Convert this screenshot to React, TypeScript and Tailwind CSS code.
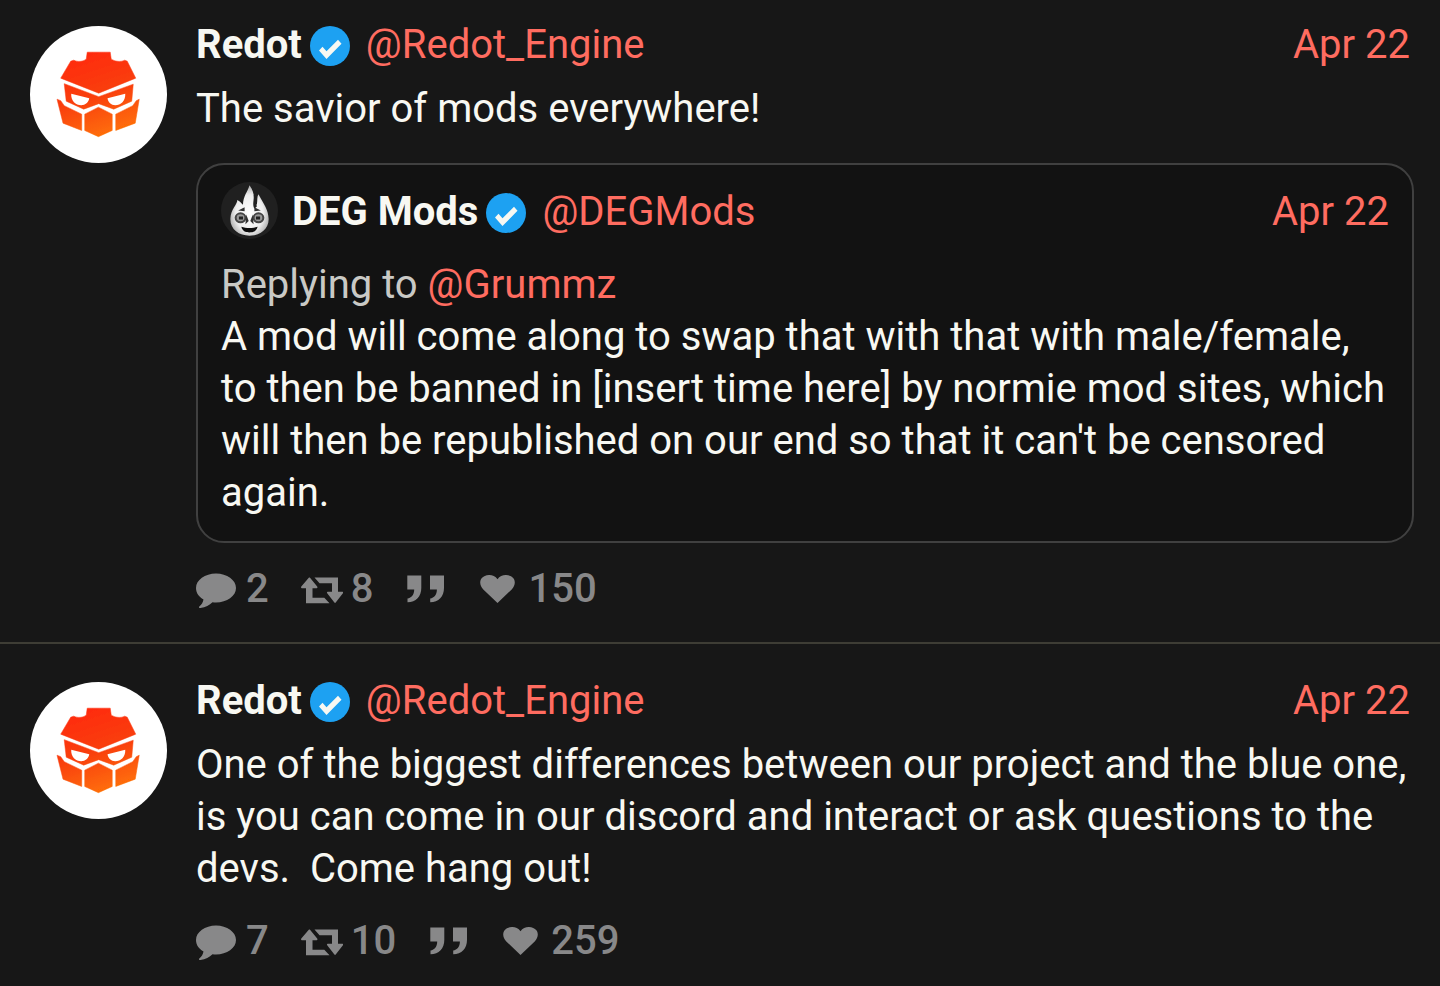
import type { ReactNode } from "react";

function RedotAvatar() {
  return (
    <svg viewBox="0 0 160 160" className="size-full" role="img" aria-label="Redot">
      <defs>
        <linearGradient id="redot" gradientUnits="userSpaceOnUse" x1="60" y1="38" x2="88" y2="122">
          <stop offset="0" stopColor="#ff2a08" />
          <stop offset="0.5" stopColor="#f93f10" />
          <stop offset="1" stopColor="#ff7205" />
        </linearGradient>
        <filter id="smooth" x="-10%" y="-10%" width="120%" height="120%">
          <feGaussianBlur stdDeviation="0.45" />
        </filter>
      </defs>
      <rect width="160" height="160" fill="#fff" />
      <g transform="translate(-12 -11.5) scale(1.168)" filter="url(#smooth)">
        <path
          fill="url(#redot)"
          stroke="url(#redot)"
          strokeWidth="0.5"
          d="M67.500 36H90.500L91.500 43C96 45.500 101 46 105 44L107.500 45L116 62L79 77L41 62L51 45L54 44C58 46 63 45.500 66.500 43ZM44.500 67.500L79 80.500L113.500 68L112 85L94 93L79 87.500L64 93L46.500 85ZM37.300 83L41 84.500L44.500 89.500L62 98V114.300L43.300 107ZM119.500 83L116.500 84.500L113 89.500L96 98V114.300L115.500 107ZM78.700 91L92.500 98V114.300L78.700 120.500L65 114.300V98Z"
        />
        <path
          fill="#fff"
          d="M51.500 77.500L69.500 82C69 86 65.500 89 61.500 89C56 89 51 84.500 51.500 77.500ZM105.500 77.500L87.800 82C88.300 86 91.500 89 95.500 89C101 89 106 84.500 105.500 77.500Z"
        />
      </g>
    </svg>
  );
}

function DegModsAvatar() {
  return (
    <svg viewBox="0 0 70 70" className="size-full" role="img" aria-label="DEG Mods">
      <defs>
        <radialGradient id="flame" cx="0.5" cy="0.55" r="0.6">
          <stop offset="0" stopColor="#fff" />
          <stop offset="0.6" stopColor="#eee" />
          <stop offset="1" stopColor="#999" />
        </radialGradient>
        <filter id="soft" x="-20%" y="-20%" width="140%" height="140%">
          <feGaussianBlur stdDeviation="0.9" />
        </filter>
      </defs>
      <rect width="70" height="70" fill="#202020" />
      <g filter="url(#soft)">
        <path
          fill="url(#flame)"
          d="M35 4C33 12 27 17 27 28C25 26 24 24 20 22C20 28 12 33 11.500 45C11 58 22 66 35 66C48 66 59 58 58.500 45C58 34 53 28 46 15C44 18 45 22 44 28C39 24 43 15 35 4Z"
        />
        <path fill="#222" d="M40 16C44 22 43 25 44 30L41 33C38 27 41 22 40 16Z" />
        <ellipse cx="24" cy="44" rx="6" ry="5.500" fill="#999" stroke="#444" strokeWidth="2.500" />
        <ellipse cx="46" cy="44" rx="6" ry="5.500" fill="#999" stroke="#444" strokeWidth="2.500" />
        <path fill="#222" d="M22 42.500h5v3.500h-5zM43 42.500h5v3.500h-5z" />
        <path fill="#333" d="M21 35L29 31V36ZM49 35L41 31V36ZM31 40L34 48L30 52ZM39 40L36 48L40 52Z" />
        <path fill="#111" d="M25 55C31 57 39 57 45 55C44 60 40 62 35 62C30 62 26 60 25 55Z" />
      </g>
    </svg>
  );
}

function VerifiedBadge() {
  return (
    <svg viewBox="0 0 40 40" className="mt-px size-10 shrink-0" role="img" aria-label="Verified">
      <circle cx="20" cy="20" r="20" fill="#1da1f2" />
      <path fill="#f8f8f2" d="M12.500 20.800L9 24.500L16.500 33L31.500 17.800L28 13.800L16.500 25.300Z" />
    </svg>
  );
}

function CommentIcon() {
  return (
    <svg viewBox="0 0 40 36" className="h-9 w-10" fill="currentColor" aria-hidden="true">
      <path d="M20 0.500C9 0.500 0 7 0 15C0 20 3 24 7.500 26.500C7 29.500 5.500 31.500 3.300 33.500C2.500 34.500 3.200 35.200 4.500 35C9.500 34.200 13.500 32 16.500 29.200C17.600 29.400 18.800 29.500 20 29.500C31 29.500 40 23 40 15C40 7 31 0.500 20 0.500Z" />
    </svg>
  );
}

function RetweetIcon() {
  return (
    <svg viewBox="0 0 42 28" className="h-7 w-[42px]" fill="currentColor" aria-hidden="true">
      <path d="M8 0.500L0.300 9.500C-0.300 10.400 0.200 11.200 1.300 11.200H5V26.200H28.500L23.300 20.700H11.500V11.200H15.200C16.300 11.200 16.800 10.400 16.200 9.500L9 0.800C8.700 0.300 8.300 0.300 8 0.500Z" />
      <path d="M13.500 0.500H37V14.700H41C42.100 14.700 42.500 15.600 41.900 16.300L34.700 25.500C34.300 26 33.800 26 33.400 25.500L26.200 16.300C25.600 15.600 26 14.700 27.100 14.700H31V6.200H18.500Z" />
    </svg>
  );
}

function QuoteIcon() {
  return (
    <svg viewBox="0 0 38 28" className="h-7 w-[38px]" fill="currentColor" aria-hidden="true">
      <path d="M0.300 0.500H14.300V13C14.300 21.500 9 27 0.500 27.300V23.500C4.500 23 7.200 19.500 7.200 14.500H0.300ZM23 0.500H37V13C37 21.500 31.700 27 23.200 27.300V23.500C27.200 23 29.900 19.500 29.900 14.500H23Z" />
    </svg>
  );
}

function HeartIcon() {
  return (
    <svg viewBox="0 0 36 28" className="h-7 w-9" fill="currentColor" aria-hidden="true">
      <path d="M17.500 28L3.300 14.500C0 11.300 -0.800 6.500 1.600 3.300C5 -1 13.500 -1.500 17.500 4.200C21.500 -1.500 30 -1 33.400 3.300C35.800 6.500 35 11.300 31.700 14.500Z" />
    </svg>
  );
}

function Author({ name, handle }: { name: string; handle: string }) {
  return (
    <>
      <a href="#profile" className="font-bold">{name}</a>
      <span className="ml-2 flex items-center">
        <VerifiedBadge />
      </span>
      <a href="#profile" className="ml-4 text-[#ff6c60]">{handle}</a>
      <a href="#status" className="ml-auto text-[#ff6c60]">Apr 22</a>
    </>
  );
}

type PostProps = {
  className: string;
  replies: number;
  retweets: number;
  likes: number;
  children: ReactNode;
};

function Post({ className, replies, retweets, likes, children }: PostProps) {
  return (
    <article className={`flex gap-[29px] pr-[26px] pl-[30px] ${className}`}>
      <a href="#profile" className="mt-[7px] size-[137px] shrink-0 overflow-hidden rounded-full">
        <RedotAvatar />
      </a>
      <div className="min-w-0 flex-1">
        <header className="flex pr-1">
          <Author name="Redot" handle="@Redot_Engine" />
        </header>
        {children}
        <div className="mt-5 flex items-center font-medium text-[#888889]">
          <span className="flex items-center gap-[10px]">
            <span className="pt-1"><CommentIcon /></span>
            {replies}
          </span>
          <span className="ml-8 flex items-center gap-2">
            <span className="pt-1"><RetweetIcon /></span>
            {retweets}
          </span>
          <span className="ml-[34px]">
            <QuoteIcon />
          </span>
          <span className="ml-[35px] flex items-center gap-3">
            <HeartIcon />
            {likes}
          </span>
        </div>
      </div>
    </article>
  );
}

export default function App() {
  return (
    <main className="min-h-screen bg-[#171717] font-['Roboto',sans-serif] text-[40px] leading-[52px] text-[#f8f8f2]">
      <Post className="pt-[19px] pb-[27px]" replies={2} retweets={8} likes={150}>
        <p className="mt-3">The savior of mods everywhere!</p>
        <section className="mt-7 rounded-[28px] border-2 border-[#404040] bg-[#121212] px-[23px] pt-[17px] pb-[22px]">
          <header className="flex items-end">
            <a href="#profile" className="mr-[14px] size-[57px] shrink-0 overflow-hidden rounded-full">
              <DegModsAvatar />
            </a>
            <span className="flex flex-1 pb-px">
              <Author name="DEG Mods" handle="@DEGMods" />
            </span>
          </header>
          <p className="mt-5 text-[#c9c9c5]">
            Replying to <a href="#profile" className="text-[#ff6c60]">@Grummz</a>
          </p>
          <p>
            A mod will come along to swap that with that with male/female, to then be banned in
            [insert time here] by normie mod sites, which will then be republished on our end so
            that it can't be censored again.
          </p>
        </section>
      </Post>
      <Post
        className="border-t-2 border-[#3e3d35] pt-[31px] pb-5"
        replies={7}
        retweets={10}
        likes={259}
      >
        <p className="mt-3 whitespace-pre-wrap">
          {"One of the biggest differences between our project and the blue one, is you can come in our discord and interact or ask questions to the devs.  Come hang out!"}
        </p>
      </Post>
    </main>
  );
}
